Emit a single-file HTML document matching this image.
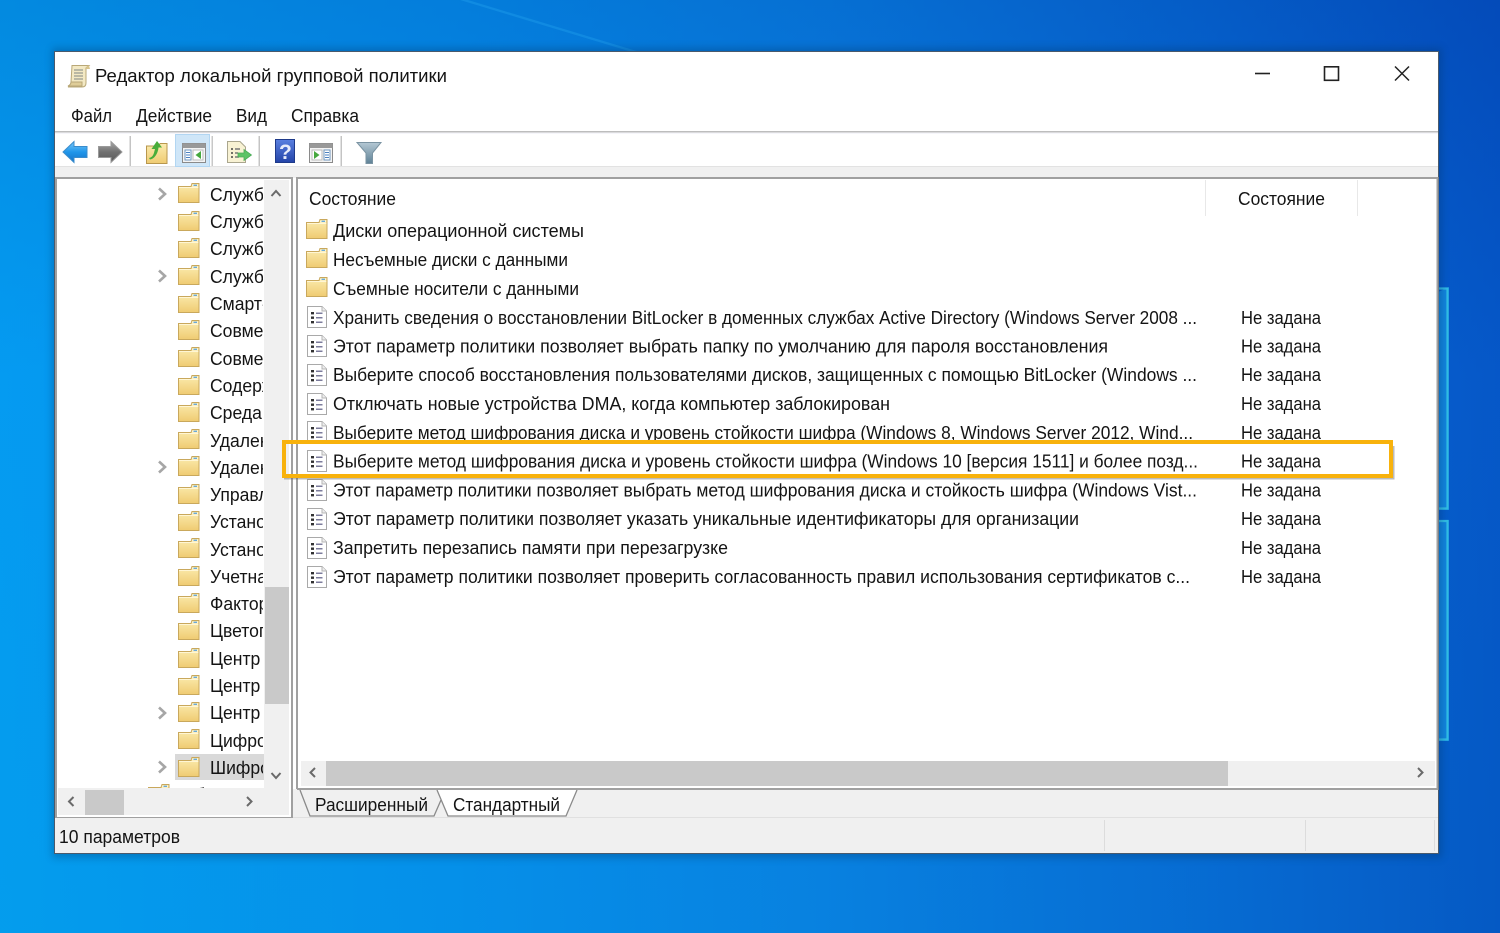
<!DOCTYPE html>
<html lang="ru"><head><meta charset="utf-8"><title>Редактор локальной групповой политики</title>
<style>
html,body{margin:0;padding:0;width:1500px;height:933px;overflow:hidden;background:#0878dc}
svg{display:block;filter:blur(.3px)}
text{font-family:"Liberation Sans",sans-serif;font-size:18.5px;fill:#141414}
</style></head><body>
<svg width="1500" height="933" viewBox="0 0 1500 933" xmlns="http://www.w3.org/2000/svg">
<defs>
<linearGradient id="bg" x1="0" y1="0" x2="1" y2="0">
<stop offset="0" stop-color="#03a9f4"/><stop offset=".3" stop-color="#0498ee"/><stop offset=".55" stop-color="#0884e2"/><stop offset=".8" stop-color="#0668d0"/><stop offset="1" stop-color="#044fbd"/></linearGradient>
<linearGradient id="bg2" x1="0" y1="0" x2="0" y2="1"><stop offset="0" stop-color="#0340b0" stop-opacity=".3"/><stop offset=".4" stop-color="#0a70e8" stop-opacity=".25"/><stop offset="1" stop-color="#0878d8" stop-opacity=".25"/></linearGradient>
<linearGradient id="fy" x1="0" y1="0" x2="0" y2="1"><stop offset="0" stop-color="#fbecb0"/><stop offset="1" stop-color="#efcb72"/></linearGradient>
<linearGradient id="ab" x1="0" y1="0" x2="0" y2="1"><stop offset="0" stop-color="#7cc8f8"/><stop offset=".5" stop-color="#1f96ea"/><stop offset="1" stop-color="#1572c8"/></linearGradient>
<linearGradient id="ag" x1="0" y1="0" x2="0" y2="1"><stop offset="0" stop-color="#a8a8a8"/><stop offset=".5" stop-color="#707070"/><stop offset="1" stop-color="#5a5a5a"/></linearGradient>
<linearGradient id="hb" x1="0" y1="0" x2="0" y2="1"><stop offset="0" stop-color="#5a80e0"/><stop offset="1" stop-color="#2444a8"/></linearGradient>
<linearGradient id="fl" x1="0" y1="0" x2="0" y2="1"><stop offset="0" stop-color="#b4c8d4"/><stop offset="1" stop-color="#5f8296"/></linearGradient>
<filter id="sh" x="-5%" y="-5%" width="110%" height="110%"><feGaussianBlur stdDeviation="4"/></filter>
<g id="f">
<path d="M.5 3.500H13L14 .5H21V19.500H.5Z" fill="url(#fy)" stroke="#c9a85c"/>
<path d="M14.500 1.500H20V3.500H14Z" fill="#fdf6d8"/><rect x="15.500" y="1.600" width="3.500" height="1.400" fill="#69a9d8"/>
<path d="M1 4.500H20.500" stroke="#fff6d4" fill="none"/>
</g>
<g id="d">
<path d="M.5.5H15L19.500 5V21.500H.5Z" fill="#fff" stroke="#a9a9a9"/>
<path d="M15 .5V5H19.500" fill="#eee" stroke="#b5b5b5"/>
<rect x="4" y="6" width="3" height="2.400" fill="#333"/><rect x="4" y="10.500" width="3" height="2.400" fill="#333"/><rect x="4" y="15" width="3" height="2.400" fill="#333"/>
<path d="M9 7.200H15.500M9 11.700H15.500M9 16.200H15.500" stroke="#7c7c9c" stroke-width="1.500"/>
</g>
<path id="c" d="M-3-5.500L3 0L-3 5.500" fill="none" stroke="#a6a6a6" stroke-width="2.600"/>
<clipPath id="tc"><rect x="58" y="180" width="205" height="608"/></clipPath>
<clipPath id="tc2"><rect x="58" y="180" width="207" height="608"/></clipPath>
</defs>

<rect width="1500" height="933" fill="url(#bg)"/>
<rect width="1500" height="933" fill="url(#bg2)"/>
<path d="M460 0L468 0L640 52L632 52Z" fill="#35b6f8" opacity=".25"/>

<path d="M1438 292L1449 287V510H1438Z" fill="#1590e4" opacity=".8"/>
<path d="M1438 288.500H1447.500V508.500H1438" fill="none" stroke="#38c8e8" stroke-width="2.200" opacity=".85"/>
<path d="M1438 520H1449V741H1438Z" fill="#1590e4" opacity=".8"/>
<path d="M1438 521H1447.500V739.500H1438" fill="none" stroke="#38c8e8" stroke-width="2.200" opacity=".85"/>

<rect x="52" y="48" width="1390" height="810" fill="#06305f" opacity=".3" filter="url(#sh)"/>
<rect x="55" y="52" width="1383" height="801" fill="#fff"/>
<rect x="54.500" y="51.500" width="1384" height="802" fill="none" stroke="#4a5a6c"/>

<!-- title icon -->
<g transform="translate(67 64)">
<path d="M5 1.500H22L19 4V19C19 22 17 23 15 23H1C3 22 4 20 4 18Z" fill="#f3e9c4" stroke="#b9a878"/>
<path d="M22 1.500C20 1.500 19 3 19 5H23Z" fill="#d8c48c"/>
<path d="M7 6H16M7 9H16M7 12H16M7 15H16" stroke="#a8a89a" stroke-width="1.500"/>
<path d="M1 22H15V18H4C4 20 3 21 1 22Z" fill="#dfcd98" stroke="#b9a878"/>
</g>
<text x="95" y="82" textLength="352" lengthAdjust="spacingAndGlyphs">Редактор локальной групповой политики</text>

<path d="M1255 73.500H1270" stroke="#222" stroke-width="1.600"/>
<rect x="1324.500" y="66.800" width="14" height="13.500" fill="none" stroke="#222" stroke-width="1.600"/>
<path d="M1395 66.500L1409 80.500M1409 66.500L1395 80.500" stroke="#222" stroke-width="1.500"/>

<text x="71" y="122" textLength="41" lengthAdjust="spacingAndGlyphs">Файл</text>
<text x="136" y="122" textLength="76" lengthAdjust="spacingAndGlyphs">Действие</text>
<text x="236" y="122" textLength="31" lengthAdjust="spacingAndGlyphs">Вид</text>
<text x="291" y="122" textLength="68" lengthAdjust="spacingAndGlyphs">Справка</text>

<rect x="55" y="131" width="1383" height="1.500" fill="#bdbdbd"/>
<rect x="55" y="132.500" width="1383" height="1.500" fill="#f6f6fb"/>
<rect x="55" y="166" width="1383" height="12" fill="#f0f0f0"/>
<rect x="55" y="166" width="1383" height="1" fill="#e2e2e2"/>

<!-- toolbar -->
<path d="M63 152L74 141.500V146.500H87V157.500H74V162.500Z" fill="url(#ab)" stroke="#3a8ccc"/>
<path d="M122 152L111 141.500V146.500H98.500V157.500H111V162.500Z" fill="url(#ag)" stroke="#9a9a9a"/>
<rect x="129.500" y="136" width="1.500" height="30" fill="#c4c4c4"/>
<g transform="translate(146 143)">
<path d="M.5 3H13L14 .5H21V20.500H.5Z" fill="url(#fy)" stroke="#b8974e"/>
<path d="M3 15C8 14 8 9 9 6L5.500 6L11 -2L16 4.500H12.500C12 11 8 16 4 16.500Z" fill="#49ad3a"/>
</g>
<rect x="175.500" y="134.500" width="34" height="32" fill="#cfe6f8" stroke="#b2d6f2"/>
<rect x="182.500" y="143.500" width="23" height="19" fill="#f4f4f4" stroke="#8a8a8a"/>
<rect x="182.500" y="143.500" width="23" height="4.500" fill="#999"/>
<rect x="185" y="150" width="6" height="10" fill="#fff" stroke="#6e94bc"/>
<path d="M186 152.500H190M186 155H190M186 157.500H190" stroke="#4a80c0"/>
<rect x="193" y="150" width="10" height="10" fill="#fff" stroke="#bbb"/>
<path d="M201 151V159L195.500 155Z" fill="#46a83e"/>
<rect x="211.500" y="136" width="1.500" height="30" fill="#c8c8c8"/>
<g transform="translate(227 141)">
<path d="M.5.5H13L18.500 6V21.500H.5Z" fill="#f8f2d4" stroke="#aaa68e"/>
<path d="M4 8H6M4 12H6M4 16H6" stroke="#444" stroke-width="1.500"/>
<path d="M8 8H13M8 12H11M8 16H12" stroke="#777" stroke-width="1.500"/>
<path d="M11 12H17V8.500L24.500 14L17 19.500V16H11Z" fill="#5cc465" stroke="#4cac58" stroke-width=".8"/>
</g>
<rect x="258.500" y="136" width="1.500" height="30" fill="#c4c4c4"/>
<rect x="275.500" y="139.500" width="19" height="23" fill="url(#hb)" stroke="#1e3a8a"/>
<text x="279" y="159" style="font-size:21px;font-weight:bold;fill:#e8ecfa">?</text>
<g transform="translate(127 0)">
<rect x="182.500" y="143.500" width="23" height="19" fill="#f4f4f4" stroke="#8a8a8a"/>
<rect x="182.500" y="143.500" width="23" height="4.500" fill="#999"/>
<rect x="185" y="150" width="10" height="10" fill="#fff" stroke="#bbb"/>
<path d="M187 151V159L192.500 155Z" fill="#46a83e"/>
<rect x="197" y="150" width="6" height="10" fill="#fff" stroke="#6e94bc"/>
<path d="M198 152.500H202M198 155H202M198 157.500H202" stroke="#4a80c0"/>
</g>
<rect x="340.500" y="136" width="1.500" height="30" fill="#c4c4c4"/>
<path d="M357 142.500H381L372.500 153V163.500H366V153Z" fill="url(#fl)" stroke="#7a93a2"/>

<!-- left pane -->
<rect x="55" y="177" width="238" height="642" fill="#f0f0f0"/>
<rect x="56" y="178" width="236" height="640" fill="#fff" stroke="#a0a0a0" stroke-width="2"/>
<rect x="58" y="180" width="232" height="636" fill="#fff"/>
<rect x="175" y="754" width="90" height="26" fill="#d9d9d9"/>
<g clip-path="url(#tc2)">
<use href="#f" x="178" y="183"/><use href="#f" x="178" y="211"/><use href="#f" x="178" y="238"/><use href="#f" x="178" y="265"/><use href="#f" x="178" y="293"/><use href="#f" x="178" y="320"/><use href="#f" x="178" y="347"/><use href="#f" x="178" y="375"/><use href="#f" x="178" y="402"/><use href="#f" x="178" y="429"/><use href="#f" x="178" y="456"/><use href="#f" x="178" y="484"/><use href="#f" x="178" y="511"/><use href="#f" x="178" y="538"/><use href="#f" x="178" y="566"/><use href="#f" x="178" y="593"/><use href="#f" x="178" y="620"/><use href="#f" x="178" y="648"/><use href="#f" x="178" y="675"/><use href="#f" x="178" y="702"/><use href="#f" x="178" y="729"/><use href="#f" x="178" y="757"/><use href="#f" x="148" y="784"/>
</g>
<use href="#c" x="162" y="194"/><use href="#c" x="162" y="276"/><use href="#c" x="162" y="467"/><use href="#c" x="162" y="713"/><use href="#c" x="162" y="767"/>
<g clip-path="url(#tc)">
<g transform="translate(210 0) scale(.95 1)">
<text x="0" y="201">Службы</text><text x="0" y="228">Службы</text><text x="0" y="255">Службы</text><text x="0" y="283">Службы</text>
<text x="0" y="310">Смарт-карта</text><text x="0" y="337">Совместимость</text><text x="0" y="365">Совместимость</text><text x="0" y="392">Содержимое</text>
<text x="0" y="419">Среда</text><text x="0" y="447">Удаленное</text><text x="0" y="474">Удаленное</text><text x="0" y="501">Управление</text>
<text x="0" y="528">Установка</text><text x="0" y="556">Установка</text><text x="0" y="583">Учетная</text><text x="0" y="610">Фактор</text>
<text x="0" y="637">Цветопередача</text><text x="0" y="665">Центр</text><text x="0" y="692">Центр</text><text x="0" y="719">Центр</text>
<text x="0" y="747">Цифровой</text><text x="0" y="774">Шифрование</text><text x="-30" y="801">Общие</text>
</g>
</g>
<rect x="264" y="180" width="25" height="608" fill="#f0f0f0"/>
<rect x="265" y="587" width="24" height="117" fill="#c9c9c9"/>
<path d="M271.500 196L276 191L280.500 196" fill="none" stroke="#6a6a6a" stroke-width="2"/>
<path d="M271.500 773L276 778L280.500 773" fill="none" stroke="#6a6a6a" stroke-width="2"/>
<rect x="58" y="788" width="231" height="27" fill="#f0f0f0"/>
<rect x="85" y="790" width="39" height="25" fill="#c9c9c9"/>
<path d="M73.500 797L69 801.500L73.500 806" fill="none" stroke="#6a6a6a" stroke-width="2"/>
<path d="M247 797L251.500 801.500L247 806" fill="none" stroke="#6a6a6a" stroke-width="2"/>

<!-- right pane -->
<rect x="297" y="178" width="1140.500" height="611" fill="#fff" stroke="#a0a0a0" stroke-width="2"/>
<rect x="299" y="179" width="1137" height="608" fill="#fff"/>
<rect x="1205" y="180" width="1" height="36" fill="#e8e8e8"/>
<rect x="1357" y="180" width="1" height="36" fill="#e8e8e8"/>
<text x="309" y="205" textLength="87" lengthAdjust="spacingAndGlyphs">Состояние</text>
<text x="1238" y="205" textLength="87" lengthAdjust="spacingAndGlyphs">Состояние</text>

<use href="#f" x="306" y="219"/><use href="#f" x="306" y="248"/><use href="#f" x="306" y="277"/>
<use href="#d" x="307" y="306"/><use href="#d" x="307" y="335"/><use href="#d" x="307" y="364"/><use href="#d" x="307" y="393"/><use href="#d" x="307" y="421"/><use href="#d" x="307" y="450"/><use href="#d" x="307" y="479"/><use href="#d" x="307" y="508"/><use href="#d" x="307" y="537"/><use href="#d" x="307" y="566"/>

<text x="333" y="237" textLength="251" lengthAdjust="spacingAndGlyphs">Диски операционной системы</text>
<text x="333" y="266" textLength="235" lengthAdjust="spacingAndGlyphs">Несъемные диски с данными</text>
<text x="333" y="295" textLength="246" lengthAdjust="spacingAndGlyphs">Съемные носители с данными</text>
<text x="333" y="324" textLength="864" lengthAdjust="spacingAndGlyphs">Хранить сведения о восстановлении BitLocker в доменных службах Active Directory (Windows Server 2008 ...</text>
<text x="333" y="352.500" textLength="775" lengthAdjust="spacingAndGlyphs">Этот параметр политики позволяет выбрать папку по умолчанию для пароля восстановления</text>
<text x="333" y="381" textLength="864" lengthAdjust="spacingAndGlyphs">Выберите способ восстановления пользователями дисков, защищенных с помощью BitLocker (Windows ...</text>
<text x="333" y="410" textLength="557" lengthAdjust="spacingAndGlyphs">Отключать новые устройства DMA, когда компьютер заблокирован</text>
<text x="333" y="439" textLength="860" lengthAdjust="spacingAndGlyphs">Выберите метод шифрования диска и уровень стойкости шифра (Windows 8, Windows Server 2012, Wind...</text>
<text x="333" y="467.500" textLength="865" lengthAdjust="spacingAndGlyphs">Выберите метод шифрования диска и уровень стойкости шифра (Windows 10 [версия 1511] и более позд...</text>
<text x="333" y="496.500" textLength="864" lengthAdjust="spacingAndGlyphs">Этот параметр политики позволяет выбрать метод шифрования диска и стойкость шифра (Windows Vist...</text>
<text x="333" y="525" textLength="746" lengthAdjust="spacingAndGlyphs">Этот параметр политики позволяет указать уникальные идентификаторы для организации</text>
<text x="333" y="554" textLength="395" lengthAdjust="spacingAndGlyphs">Запретить перезапись памяти при перезагрузке</text>
<text x="333" y="583" textLength="857" lengthAdjust="spacingAndGlyphs">Этот параметр политики позволяет проверить согласованность правил использования сертификатов с...</text>

<text x="1241" y="324" textLength="80" lengthAdjust="spacingAndGlyphs">Не задана</text>
<text x="1241" y="352.500" textLength="80" lengthAdjust="spacingAndGlyphs">Не задана</text>
<text x="1241" y="381" textLength="80" lengthAdjust="spacingAndGlyphs">Не задана</text>
<text x="1241" y="410" textLength="80" lengthAdjust="spacingAndGlyphs">Не задана</text>
<text x="1241" y="439" textLength="80" lengthAdjust="spacingAndGlyphs">Не задана</text>
<text x="1241" y="467.500" textLength="80" lengthAdjust="spacingAndGlyphs">Не задана</text>
<text x="1241" y="496.500" textLength="80" lengthAdjust="spacingAndGlyphs">Не задана</text>
<text x="1241" y="525" textLength="80" lengthAdjust="spacingAndGlyphs">Не задана</text>
<text x="1241" y="554" textLength="80" lengthAdjust="spacingAndGlyphs">Не задана</text>
<text x="1241" y="583" textLength="80" lengthAdjust="spacingAndGlyphs">Не задана</text>

<rect x="301" y="761" width="1134" height="25" fill="#f0f0f0"/>
<rect x="326" y="761" width="902" height="25" fill="#c9c9c9"/>
<path d="M315 768L310.500 772.500L315 777" fill="none" stroke="#6a6a6a" stroke-width="2"/>
<path d="M1418 768L1422.500 772.500L1418 777" fill="none" stroke="#6a6a6a" stroke-width="2"/>

<!-- tabs -->
<rect x="293" y="789" width="1145" height="29" fill="#f0f0f0"/>
<rect x="297" y="788" width="1141" height="2" fill="#a0a0a0"/>
<rect x="55" y="818" width="1383" height="35" fill="#f0f0f0"/>
<rect x="293" y="817" width="1145" height="1" fill="#e0e0e0"/>
<path d="M300 790L310 816H434L441 800" fill="#f0f0f0" stroke="#8a8a8a" stroke-width="1.300"/>
<path d="M437 790L448 816H566L577 790" fill="#fff" stroke="#8a8a8a" stroke-width="1.300"/>
<text x="315" y="811" textLength="113" lengthAdjust="spacingAndGlyphs">Расширенный</text>
<text x="453" y="811" textLength="107" lengthAdjust="spacingAndGlyphs">Стандартный</text>

<!-- status -->
<rect x="1104" y="820" width="1" height="31" fill="#dcdcdc"/>
<rect x="1305" y="820" width="1" height="31" fill="#dcdcdc"/>
<rect x="1434" y="820" width="1" height="31" fill="#dcdcdc"/>
<text x="59" y="843" textLength="121" lengthAdjust="spacingAndGlyphs">10 параметров</text>

<!-- highlight -->
<path d="M284 478.500H1393.500V446" fill="none" stroke="#555" stroke-width="2" opacity=".4"/>
<rect x="284" y="442" width="1107" height="34" fill="none" stroke="#f8b20c" stroke-width="4"/>
</svg>
</body></html>
